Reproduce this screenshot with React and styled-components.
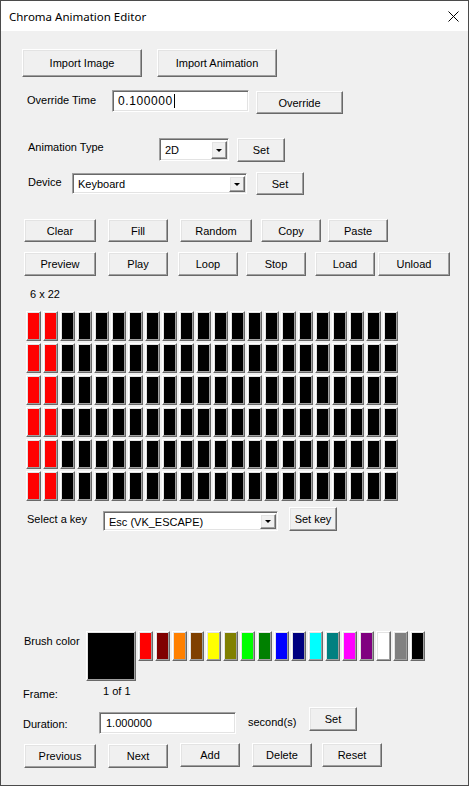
import React from 'react'
import styled, { createGlobalStyle, css } from 'styled-components'

const GlobalStyle = createGlobalStyle`
  body {
    margin: 0;
    background: #f0f0f0;
  }
  * {
    box-sizing: border-box;
  }
`

const raised = css`
  border: 1px solid;
  border-color: #ffffff #696969 #696969 #ffffff;
  box-shadow: inset -1px -1px #a0a0a0, inset 1px 1px #e3e3e3;
`

const sunken = css`
  border: 1px solid;
  border-color: #a0a0a0 #ffffff #ffffff #a0a0a0;
  box-shadow: inset 1px 1px #696969, inset -1px -1px #e3e3e3;
`

const Window = styled.div`
  width: 469px;
  height: 786px;
  border: 1px solid #4b4b4b;
  background: #f0f0f0;
  display: flex;
  flex-direction: column;
  overflow: hidden;
  font-family: 'Liberation Sans', Arial, sans-serif;
  font-size: 11px;
  color: #000;
`

const TitleBar = styled.div`
  height: 30px;
  flex-shrink: 0;
  background: #fff;
  display: flex;
  align-items: center;
  justify-content: space-between;
  padding: 0 9px 0 8px;
  font-family: 'Noto Sans', 'Open Sans', sans-serif;
  font-size: 11.5px;
`

const Body = styled.div`
  display: flex;
  flex-direction: column;
`

const Line = styled.div`
  display: flex;
  align-items: flex-start;
  flex-shrink: 0;
  height: ${(p) => p.$h}px;
  margin-top: ${(p) => p.$mt}px;
`

const Label = styled.div`
  width: ${(p) => (p.$w ? `${p.$w}px` : 'auto')};
  margin-left: ${(p) => p.$ml || 0}px;
  margin-top: ${(p) => p.$dy || 0}px;
  line-height: 13px;
  white-space: nowrap;
  flex-shrink: 0;
`

const Button = styled.div`
  ${raised}
  width: ${(p) => p.$w}px;
  height: ${(p) => p.$h || 24}px;
  margin-left: ${(p) => p.$ml || 0}px;
  margin-top: ${(p) => p.$dy || 0}px;
  background: #f0f0f0;
  display: flex;
  align-items: center;
  justify-content: center;
  flex-shrink: 0;
  white-space: nowrap;
`

const TextBox = styled.div`
  ${sunken}
  width: ${(p) => p.$w}px;
  height: ${(p) => p.$h || 22}px;
  margin-left: ${(p) => p.$ml || 0}px;
  margin-top: ${(p) => p.$dy || 0}px;
  background: #fff;
  display: flex;
  align-items: center;
  padding-left: ${(p) => p.$pad || 6}px;
  flex-shrink: 0;
  font-size: ${(p) => p.$fs || 11}px;
  letter-spacing: ${(p) => p.$ls || 0}px;
`

const Caret = styled.span`
  display: inline-block;
  width: 1px;
  height: 14px;
  background: #000;
  margin-left: 1px;
`

const Select = styled.div`
  ${sunken}
  width: ${(p) => p.$w}px;
  height: ${(p) => p.$h}px;
  margin-left: ${(p) => p.$ml || 0}px;
  margin-top: ${(p) => p.$dy || 0}px;
  background: #fff;
  display: flex;
  align-items: stretch;
  padding: 2px 1px 1px 2px;
  flex-shrink: 0;
`

const SelectText = styled.div`
  flex: 1;
  display: flex;
  align-items: center;
  padding-left: 3px;
`

const ArrowButton = styled.div`
  ${raised}
  width: 16px;
  background: #f0f0f0;
  display: flex;
  align-items: center;
  justify-content: center;

  &::after {
    content: '';
    border-left: 3px solid transparent;
    border-right: 3px solid transparent;
    border-top: 3px solid #000;
  }
`

const CellGrid = styled.div`
  display: grid;
  grid-template-columns: repeat(22, 15px);
  grid-auto-rows: 30px;
  gap: 2px;
  margin-top: 10px;
  margin-left: 25px;
`

const Swatch = styled.div`
  ${raised}
  width: ${(p) => p.$w || 15}px;
  height: ${(p) => p.$h || 30}px;
  background: ${(p) => p.$color};
  flex-shrink: 0;
`

const CellSwatch = styled.div`
  ${raised}
  background: ${(p) => p.$color};
`

const Palette = styled.div`
  display: flex;
  gap: 2px;
  margin-left: 2px;
`

const CloseIcon = () => (
  <svg width="11" height="11" viewBox="0 0 11 11">
    <path d="M0.5 0.5 L10.5 10.5 M10.5 0.5 L0.5 10.5" stroke="#000" strokeWidth="1" fill="none" />
  </svg>
)

const COLS = 22
const ROWS = 6
const cells = Array.from({ length: ROWS * COLS }, (_, i) =>
  i % COLS < 2 ? '#ff0000' : '#000000'
)

const palette = [
  '#ff0000',
  '#800000',
  '#ff8000',
  '#804000',
  '#ffff00',
  '#808000',
  '#00ff00',
  '#008000',
  '#0000ff',
  '#000080',
  '#00ffff',
  '#008080',
  '#ff00ff',
  '#800080',
  '#ffffff',
  '#808080',
  '#000000',
]

export default function App() {
  return (
    <>
      <GlobalStyle />
      <Window>
        <TitleBar>
          <span>Chroma Animation Editor</span>
          <CloseIcon />
        </TitleBar>
        <Body>
          <Line $mt={18} $h={28}>
            <Button $ml={21} $w={120} $h={28}>Import Image</Button>
            <Button $ml={15} $w={120} $h={28}>Import Animation</Button>
          </Line>

          <Line $mt={13} $h={24}>
            <Label $ml={26} $w={85} $dy={4}>Override Time</Label>
            <TextBox $w={137} $h={22} $pad={5} $fs={12} $ls={0.6}>
              0.100000
              <Caret />
            </TextBox>
            <Button $ml={7} $w={87} $h={23} $dy={1}>Override</Button>
          </Line>

          <Line $mt={24} $h={24}>
            <Label $ml={27} $w={131} $dy={3}>Animation Type</Label>
            <Select $w={70} $h={23}>
              <SelectText>2D</SelectText>
              <ArrowButton />
            </Select>
            <Button $ml={8} $w={48} $h={24}>Set</Button>
          </Line>

          <Line $mt={10} $h={23}>
            <Label $ml={27} $w={44} $dy={4}>Device</Label>
            <Select $w={175} $h={21} $dy={1}>
              <SelectText>Keyboard</SelectText>
              <ArrowButton />
            </Select>
            <Button $ml={9} $w={48} $h={23}>Set</Button>
          </Line>

          <Line $mt={24} $h={23}>
            <Button $ml={23} $w={72} $h={23}>Clear</Button>
            <Button $ml={12} $w={60} $h={23}>Fill</Button>
            <Button $ml={12} $w={72} $h={23}>Random</Button>
            <Button $ml={9} $w={60} $h={23}>Copy</Button>
            <Button $ml={7} $w={60} $h={23}>Paste</Button>
          </Line>

          <Line $mt={10} $h={24}>
            <Button $ml={23} $w={72}>Preview</Button>
            <Button $ml={12} $w={60}>Play</Button>
            <Button $ml={10} $w={60}>Loop</Button>
            <Button $ml={8} $w={60}>Stop</Button>
            <Button $ml={9} $w={60}>Load</Button>
            <Button $ml={3} $w={72}>Unload</Button>
          </Line>

          <Line $mt={12} $h={13}>
            <Label $ml={29}>6 x 22</Label>
          </Line>

          <CellGrid>
            {cells.map((c, i) => (
              <CellSwatch key={i} $color={c} />
            ))}
          </CellGrid>

          <Line $mt={6} $h={24}>
            <Label $ml={26} $w={76} $dy={6}>Select a key</Label>
            <Select $w={175} $h={20} $dy={4}>
              <SelectText>Esc (VK_ESCAPE)</SelectText>
              <ArrowButton />
            </Select>
            <Button $ml={11} $w={48} $h={24}>Set key</Button>
          </Line>

          <Line $mt={100} $h={50}>
            <Label $ml={23} $w={62} $dy={4}>Brush color</Label>
            <Swatch $w={50} $h={50} $color="#000000" />
            <Palette>
              {palette.map((c) => (
                <Swatch key={c} $color={c} />
              ))}
            </Palette>
          </Line>

          <Line $mt={4} $h={16}>
            <Label $ml={22} $w={80} $dy={3}>Frame:</Label>
            <Label $dy={0}>1 of 1</Label>
          </Line>

          <Line $mt={6} $h={27}>
            <Label $ml={22} $w={76} $dy={11}>Duration:</Label>
            <TextBox $w={137} $h={22} $dy={5}>1.000000</TextBox>
            <Label $ml={12} $w={61} $dy={9}>second(s)</Label>
            <Button $w={48} $h={24}>Set</Button>
          </Line>

          <Line $mt={9} $h={25}>
            <Button $ml={23} $w={72} $dy={1}>Previous</Button>
            <Button $ml={12} $w={60} $dy={1}>Next</Button>
            <Button $ml={12} $w={60}>Add</Button>
            <Button $ml={12} $w={60}>Delete</Button>
            <Button $ml={10} $w={60}>Reset</Button>
          </Line>
        </Body>
      </Window>
    </>
  )
}
